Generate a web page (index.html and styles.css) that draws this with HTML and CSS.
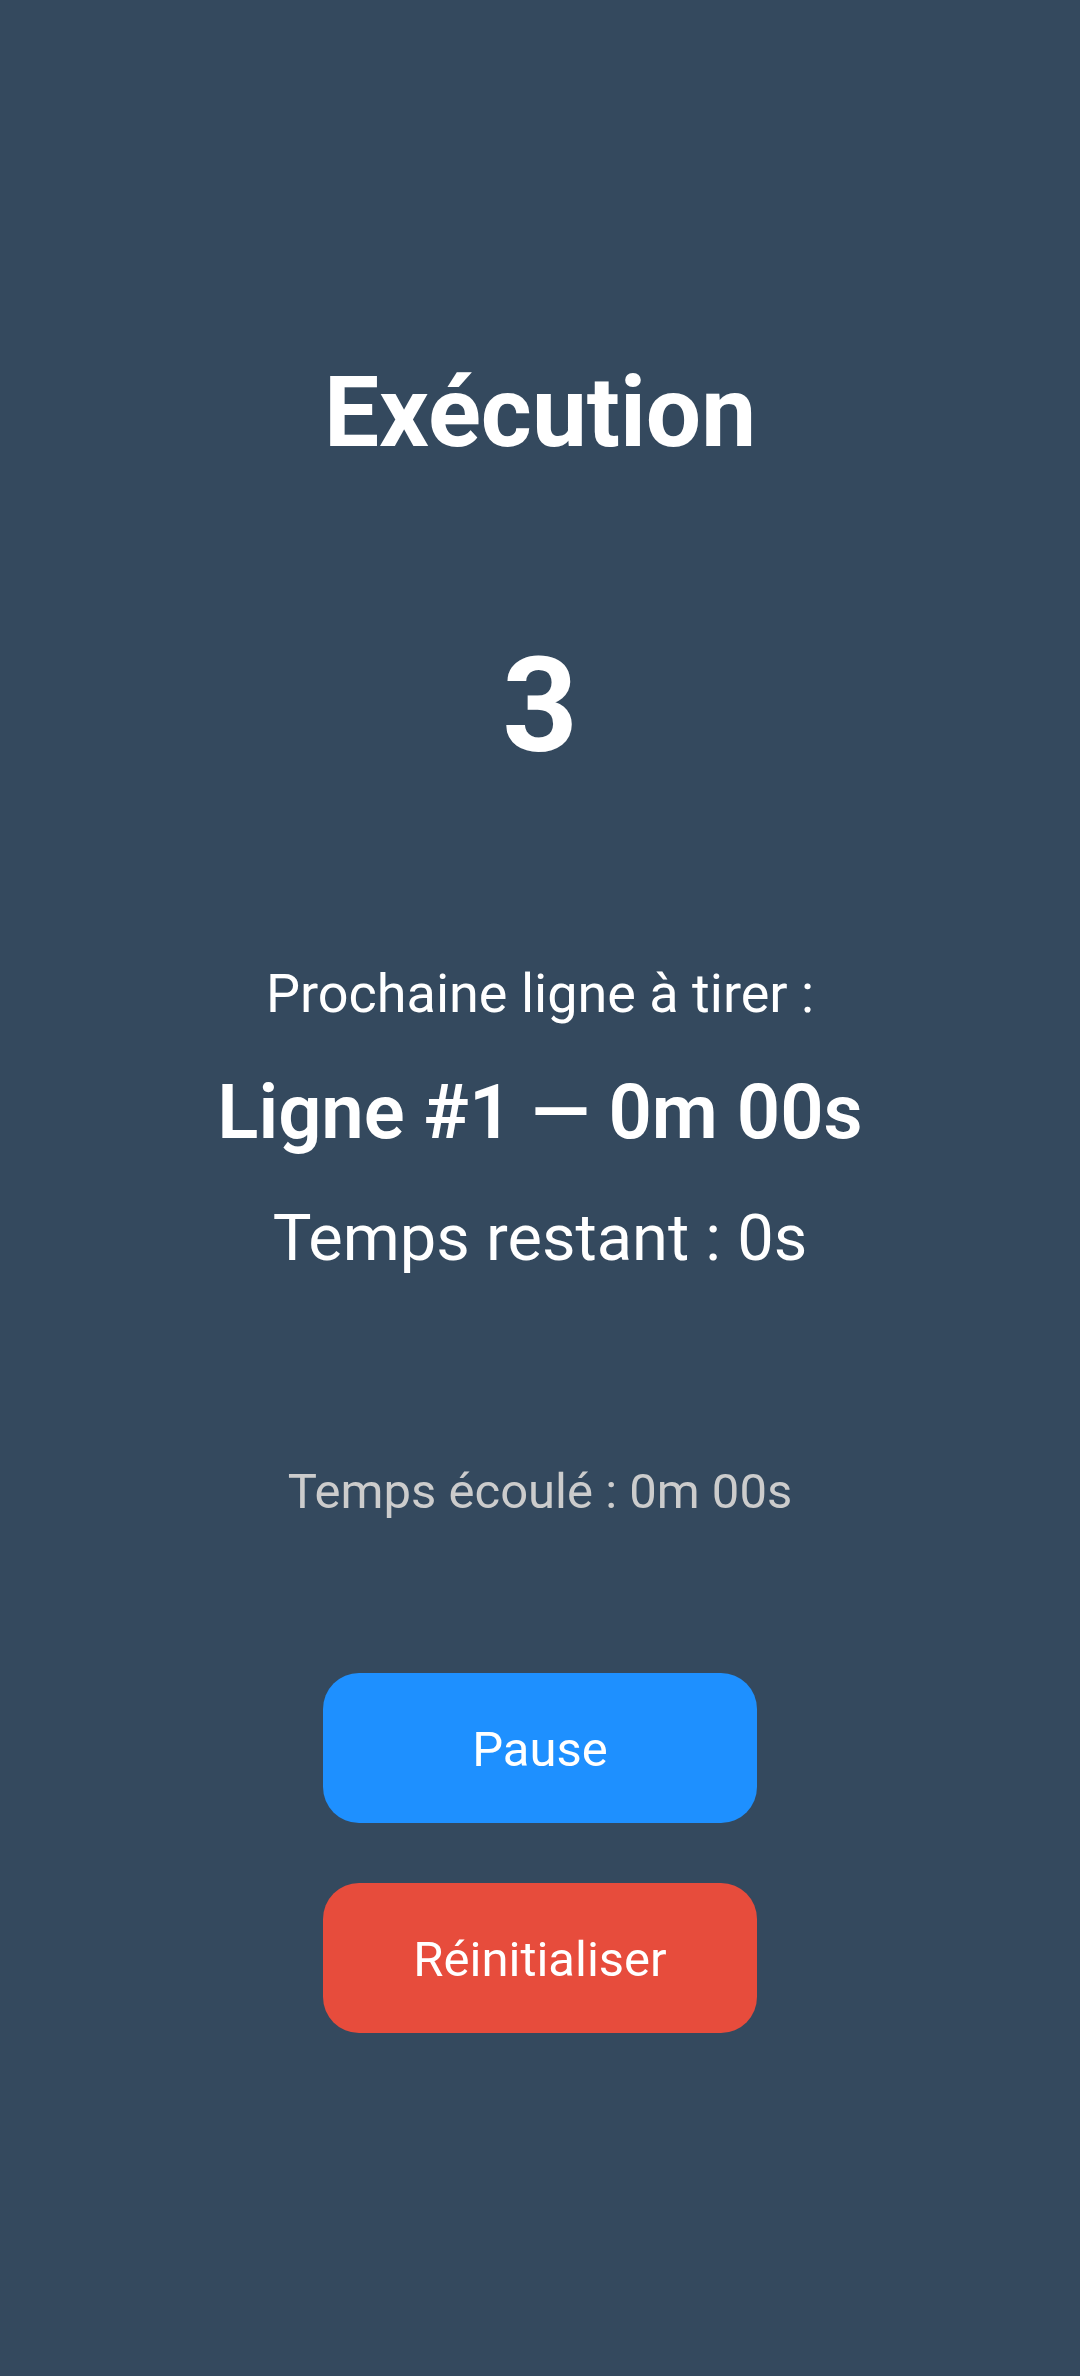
FILE: index.html
```html
<!DOCTYPE html>
<html lang="fr">
<head>
<meta charset="utf-8">
<meta name="viewport" content="width=device-width, initial-scale=1">
<title>Exécution</title>
<link rel="stylesheet" href="styles.css">
</head>
<body>
<main class="screen">
  <h1 class="title">Exécution</h1>
  <p class="count">3</p>
  <section class="next">
    <p class="next-label">Prochaine ligne à tirer :</p>
    <h2 class="next-line">Ligne #1 — 0m 00s</h2>
    <p class="remaining">Temps restant : 0s</p>
  </section>
  <p class="elapsed">Temps écoulé : 0m 00s</p>
  <div class="actions">
    <button class="button pause" type="button">Pause</button>
    <button class="button reset" type="button">Réinitialiser</button>
  </div>
</main>
</body>
</html>
```
FILE: styles.css
```css
* {
  box-sizing: border-box;
}

body {
  margin: 0;
  background: #34495e;
  color: #fff;
  font-family: Roboto, sans-serif;
}

h1, h2, p {
  margin: 0;
  text-align: center;
}

.screen {
  min-height: 100vh;
  display: flex;
  flex-direction: column;
  align-items: center;
  justify-content: center;
}

.title {
  font-size: 98px;
  line-height: 140px;
  font-weight: 700;
}

.count {
  margin-top: 135px;
  font-size: 132px;
  line-height: 176px;
  font-weight: 700;
}

.next {
  margin-top: 164px;
  display: flex;
  flex-direction: column;
  gap: 32px;
}

.next-label {
  font-size: 54px;
  line-height: 72px;
}

.next-line {
  font-size: 76px;
  line-height: 100px;
  font-weight: 600;
}

.remaining {
  font-size: 65px;
  line-height: 88px;
}

.elapsed {
  margin-top: 178px;
  color: #ccc;
  font-size: 49px;
  line-height: 64px;
}

.actions {
  margin-top: 149px;
  display: grid;
  gap: 60px;
}

.button {
  border: 0;
  border-radius: 36px;
  padding: 44px 90px 40px;
  color: #fff;
  font: 400 49px/66px Roboto, sans-serif;
}

.pause {
  background: #1e90ff;
}

.reset {
  background: #e74c3c;
}
```
